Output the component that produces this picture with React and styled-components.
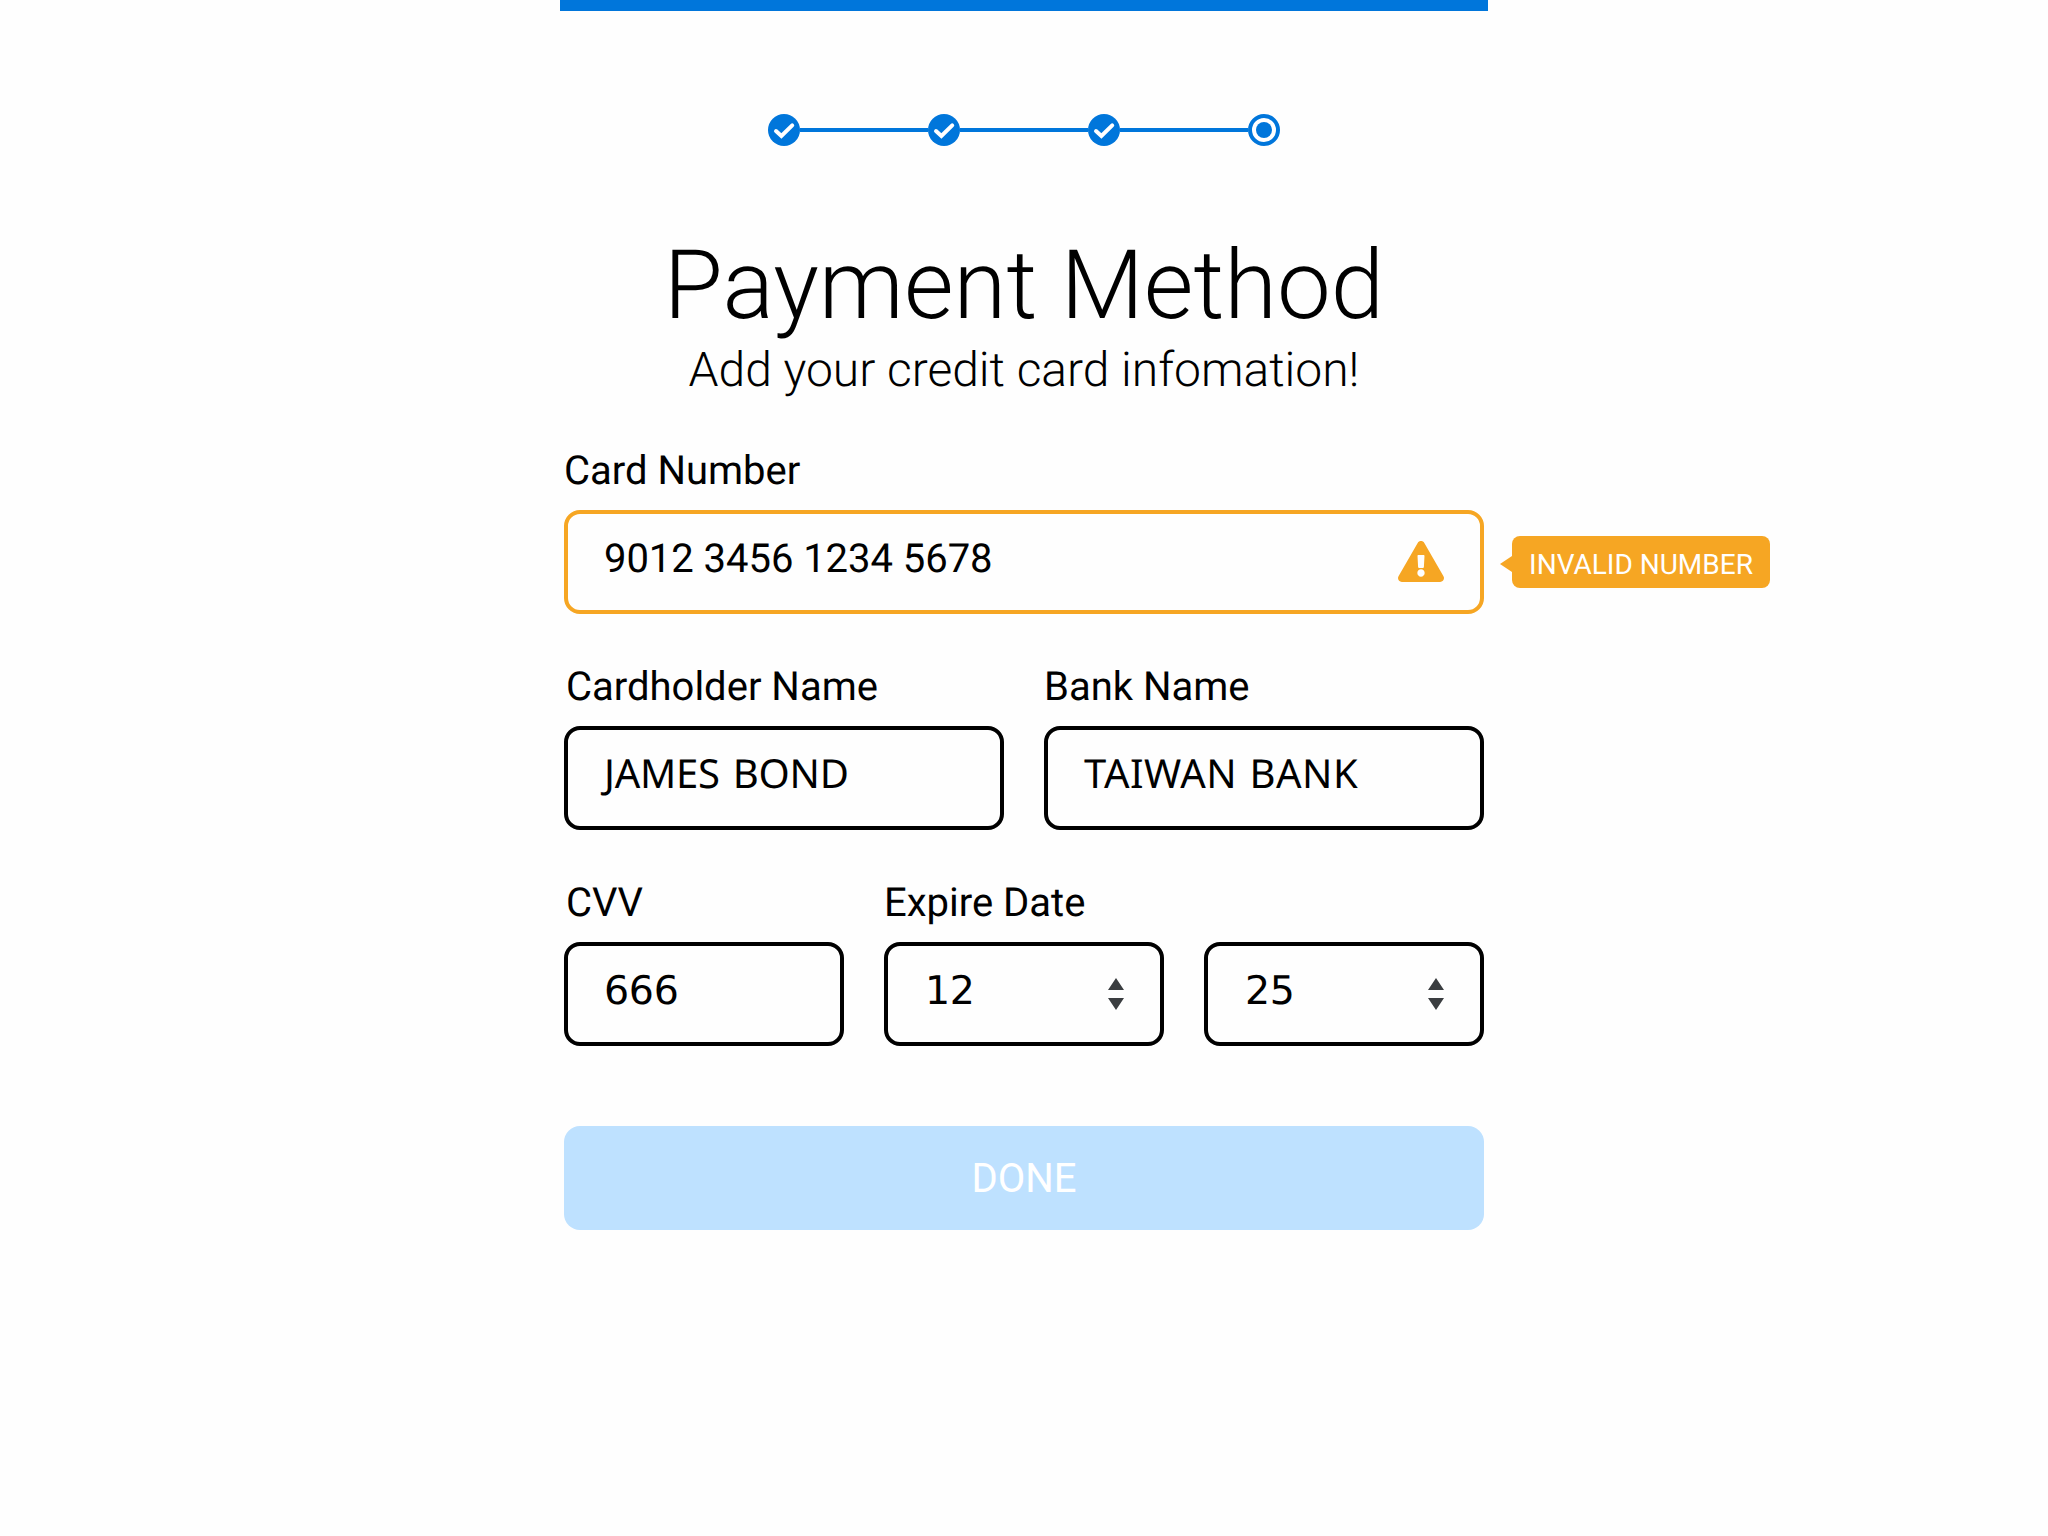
import React from 'react';
import styled, { createGlobalStyle } from 'styled-components';
import { FaExclamationTriangle } from 'react-icons/fa';

const BLUE = '#0076db';
const AMBER = '#f6a623';

const GlobalStyle = createGlobalStyle`
  * { box-sizing: border-box; }
  body {
    margin: 0;
    background: #fefefe;
    color: #000;
    font-family: Roboto, "Liberation Sans", sans-serif;
    text-rendering: geometricPrecision;
  }
`;

const Page = styled.main`
  width: 928px;
  min-height: 1536px;
  margin: 0 auto;
  display: flex;
  flex-direction: column;
  align-items: center;
  border-top: 11px solid ${BLUE};
`;

const Steps = styled.div`
  display: flex;
  align-items: center;
  margin-top: 103px;
`;

const StepIcon = styled.svg`
  display: block;
  width: 32px;
  height: 32px;
`;

const StepLine = styled.div`
  width: 128px;
  height: 4px;
  background: ${BLUE};
`;

const Title = styled.h1`
  margin: 84px 0 0;
  font-size: 96px;
  line-height: 112px;
  font-weight: 300;
  white-space: nowrap;
`;

const Subtitle = styled.p`
  margin: 0 0 48px;
  font-size: 48px;
  line-height: 56px;
  font-weight: 300;
  letter-spacing: -0.03px;
  white-space: nowrap;
`;

const Form = styled.div`
  width: 920px;
  display: flex;
  flex-direction: column;
  gap: 48px;
`;

const Row = styled.div`
  display: grid;
  grid-template-columns: repeat(${(p) => p.$columns}, 1fr);
  gap: 40px;
  align-items: end;
`;

const Field = styled.div`
  display: flex;
  flex-direction: column;
  gap: 14px;
`;

const Label = styled.label`
  padding-left: ${(p) => p.$indent || 0}px;
  font-size: 40px;
  line-height: 50px;
  white-space: nowrap;
`;

const Box = styled.div`
  position: relative;
  display: flex;
  justify-content: space-between;
  height: 104px;
  padding: 0 36px;
  border: 4px solid ${(p) => (p.$invalid ? AMBER : '#000')};
  border-radius: 16px;
`;

const Value = styled.span`
  font-size: 40px;
  line-height: 90px;
  letter-spacing: -0.05px;
  white-space: nowrap;
`;

const NameValue = styled(Value)`
  font-family: "Noto Sans", sans-serif;
  line-height: 86px;
  letter-spacing: ${(p) => p.$tracking}px;
  word-spacing: ${(p) => p.$wordGap}px;
`;

const DigitValue = styled(Value)`
  padding-left: ${(p) => p.$indent || 0}px;
  font-family: "DejaVu Sans", sans-serif;
  font-size: 39.5px;
  letter-spacing: -0.3px;
`;

const WarningIcon = styled(FaExclamationTriangle)`
  width: 46px;
  height: 41px;
  margin-top: 27px;
  color: ${AMBER};
`;

const Arrows = styled.svg`
  width: 16px;
  height: 32px;
  margin-top: 32px;
  fill: #3a3d40;
`;

const Tooltip = styled.div`
  position: absolute;
  top: 22px;
  left: calc(100% + 32px);
  width: 258px;
  height: 52px;
  border-radius: 8px;
  background: ${AMBER};
  color: #fff;
  font-size: 28px;
  line-height: 58px;
  text-align: center;
  white-space: nowrap;

  &::before {
    content: "";
    position: absolute;
    left: -12px;
    top: 20px;
    border: 8px solid transparent;
    border-left-width: 0;
    border-right: 12px solid ${AMBER};
  }
`;

const DoneButton = styled.button`
  height: 104px;
  margin-top: 32px;
  padding: 2px 0 0;
  border: 0;
  border-radius: 16px;
  background: #bee1ff;
  color: #fff;
  font: 400 40px/102px Roboto, sans-serif;
`;

function DoneStep() {
  return (
    <StepIcon viewBox="0 0 32 32">
      <circle cx="16" cy="16" r="16" fill={BLUE} />
      <path d="M8 17L13.4 22L24.2 11.4" fill="none" stroke="#fff" strokeWidth="4" strokeLinecap="round" />
    </StepIcon>
  );
}

function CurrentStep() {
  return (
    <StepIcon viewBox="0 0 32 32">
      <circle cx="16" cy="16" r="14" fill="#fff" stroke={BLUE} strokeWidth="4" />
      <circle cx="16" cy="16" r="8" fill={BLUE} />
    </StepIcon>
  );
}

function SelectArrows() {
  return (
    <Arrows viewBox="0 0 16 32">
      <path d="M8 0L16 12H0ZM8 32L16 20H0Z" />
    </Arrows>
  );
}

export default function App() {
  return (
    <>
      <GlobalStyle />
      <Page>
        <Steps>
          <DoneStep />
          <StepLine />
          <DoneStep />
          <StepLine />
          <DoneStep />
          <StepLine />
          <CurrentStep />
        </Steps>
        <Title>Payment Method</Title>
        <Subtitle>Add your credit card infomation!</Subtitle>
        <Form>
          <Field>
            <Label>Card Number</Label>
            <Box $invalid>
              <Value>9012 3456 1234 5678</Value>
              <WarningIcon />
              <Tooltip>INVALID NUMBER</Tooltip>
            </Box>
          </Field>
          <Row $columns={2}>
            <Field>
              <Label $indent={2}>Cardholder Name</Label>
              <Box>
                <NameValue $tracking={-0.25} $wordGap={3}>JAMES BOND</NameValue>
              </Box>
            </Field>
            <Field>
              <Label>Bank Name</Label>
              <Box>
                <NameValue $tracking={0.5} $wordGap={1.5}>TAIWAN BANK</NameValue>
              </Box>
            </Field>
          </Row>
          <Row $columns={3}>
            <Field>
              <Label $indent={2}>CVV</Label>
              <Box>
                <DigitValue>666</DigitValue>
              </Box>
            </Field>
            <Field>
              <Label>Expire Date</Label>
              <Box>
                <DigitValue $indent={1}>12</DigitValue>
                <SelectArrows />
              </Box>
            </Field>
            <Field>
              <Box>
                <DigitValue $indent={1}>25</DigitValue>
                <SelectArrows />
              </Box>
            </Field>
          </Row>
          <DoneButton type="button">DONE</DoneButton>
        </Form>
      </Page>
    </>
  );
}
